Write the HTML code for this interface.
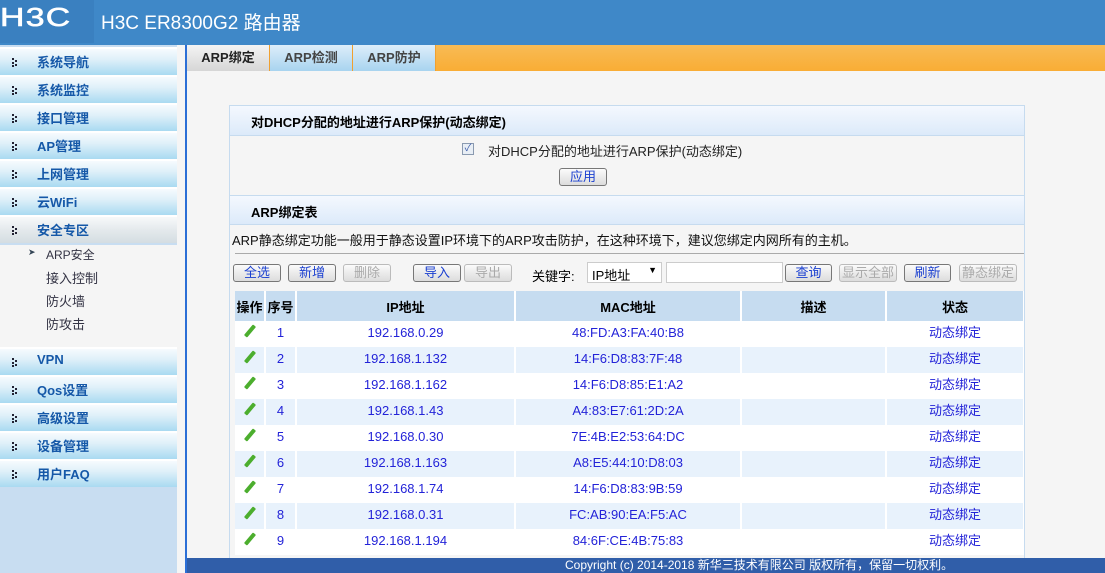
<!DOCTYPE html>
<html><head><meta charset="utf-8"><style>
*{margin:0;padding:0;box-sizing:border-box}
body{width:1105px;height:573px;overflow:hidden;background:#f5f5f5;font-family:"Liberation Sans","Noto Sans CJK SC",sans-serif;font-size:12px;position:relative;color:#000}
.a{position:absolute}
#hd{left:0;top:0;width:1105px;height:45px;background:#3f88c8}
#logo{left:0;top:0;width:94px;height:43px;background:#3a80c0;overflow:hidden}
#logo span{position:absolute;left:0;top:0;color:#fff;font:26px "Liberation Sans",sans-serif;line-height:34px;letter-spacing:1px;transform:scaleX(1.3);transform-origin:left;-webkit-text-stroke:0.6px #fff}
#title{left:101px;top:8px;color:#fff;font-size:19px}
#side{left:0;top:45px;width:177px;height:528px;background:#c8ddf1}
.mi{position:absolute;left:0;width:177px;height:28px;background:linear-gradient(#f6fbfe 0%,#dff0f9 40%,#a9daf1 100%);border-top:2px solid #fff}
.mi b{position:absolute;left:37px;top:3px;color:#1558a8;font-size:13px;font-weight:bold}
.mi i{position:absolute;left:12px;top:9px;width:2px;height:2px;background:#223;box-shadow:3px 2px 0 #223,0 4px 0 #223,3px 6px 0 #223 ,0 7px 0 #223}
.sub{position:absolute;left:46px;color:#334;font-size:13px}
#vline{left:185px;top:45px;width:2px;height:528px;background:#2c6fd6}
#tabs{left:187px;top:45px;width:918px;height:26px;background:linear-gradient(#f8bb55,#f9ad35)}
.tab{position:absolute;top:0;height:26px;width:83px;background:linear-gradient(#ddeefa,#a8d4ef);border-right:1px solid #f0a030;color:#444;font-weight:bold;font-size:13px;text-align:center;line-height:25px}
#panel{left:229px;top:105px;width:796px;height:460px;border:1px solid #c6dbef;background:#f5f5f5;overflow:hidden}
.ph{position:absolute;left:0;width:794px;height:30px;background:linear-gradient(#f4f8fe,#dceafa);border-bottom:1px solid #c6dbef;font-weight:bold;font-size:13px;padding:6px 0 0 21px}
.btn{position:absolute;height:18px;border:1px solid #777;border-radius:3px;background:linear-gradient(#fbfbfb,#dcdcdc);color:#1a3fd0;text-align:center;line-height:16px;font-size:13px}
.btn.d{color:#aaa;border-color:#bbb}
table{border-collapse:collapse;position:absolute;left:5px;top:185px;width:789px;table-layout:fixed}
th{background:#c6dcf0;height:30px;font-weight:bold;font-size:13px;border-right:2px solid #fff}
td{height:26px;text-align:center;color:#2323d8;font-size:13px;border-right:2px solid #fff;line-height:14px;padding-bottom:2px}
tr.e td{background:#e8f2fc}tr.o td{background:#fff}
#foot{left:187px;top:558px;width:918px;height:15px;background:#305ea9;color:#fff;font-size:12px;line-height:15px;padding-left:378px}
td:first-child{color:#3a9a2a;font-size:0}
td:first-child::before{content:"";display:inline-block;width:14px;height:4px;background:#4cae2e;transform:rotate(-50deg);border-radius:1px}
</style></head><body>
<div id="hd" class="a"></div>
<div id="logo" class="a"><span>H3C</span></div>
<div id="title" class="a">H3C ER8300G2 路由器</div>
<div id="side" class="a">
<div class="mi" style="top:2px"><i></i><b>系统导航</b></div>
<div class="mi" style="top:30px"><i></i><b>系统监控</b></div>
<div class="mi" style="top:58px"><i></i><b>接口管理</b></div>
<div class="mi" style="top:86px"><i></i><b>AP管理</b></div>
<div class="mi" style="top:114px"><i></i><b>上网管理</b></div>
<div class="mi" style="top:142px"><i></i><b>云WiFi</b></div>
<div class="mi" style="top:170px;background:linear-gradient(#f7f9fa,#e4e9ec 50%,#d4dde2)"><i></i><b>安全专区</b></div>
<div style="position:absolute;left:0;top:200px;width:177px;height:102px;background:#f5f5f5"></div>
<div class="sub" style="top:202px;left:28px;font-size:9px;color:#345">&#10148;</div>
<div class="sub" style="top:201px;font-size:12px">ARP安全</div>
<div class="sub" style="top:223px">接入控制</div>
<div class="sub" style="top:246px">防火墙</div>
<div class="sub" style="top:269px">防攻击</div>
<div class="mi" style="top:302px"><i></i><b>VPN</b></div>
<div class="mi" style="top:330px"><i></i><b>Qos设置</b></div>
<div class="mi" style="top:358px"><i></i><b>高级设置</b></div>
<div class="mi" style="top:386px"><i></i><b>设备管理</b></div>
<div class="mi" style="top:414px"><i></i><b>用户FAQ</b></div>
</div>
<div id="vline" class="a"></div>
<div id="tabs" class="a">
<div class="tab" style="left:0;background:linear-gradient(#f4f4f4,#d6d6d6);color:#222">ARP绑定</div>
<div class="tab" style="left:83px">ARP检测</div>
<div class="tab" style="left:166px">ARP防护</div>
</div>
<div id="panel" class="a">
<div class="ph" style="top:0">对DHCP分配的地址进行ARP保护(动态绑定)</div>
<div class="a" style="left:232px;top:37px;width:12px;height:12px;border:1px solid #8a9ab0;background:#e8eef5;color:#3a5aa8;font-size:10px;line-height:10px;text-align:center">✓</div>
<div class="a" style="left:258px;top:35px;font-size:13px;color:#222">对DHCP分配的地址进行ARP保护(动态绑定)</div>
<div class="btn" style="left:329px;top:62px;width:48px">应用</div>
<div class="ph" style="top:89px;border-top:1px solid #c6dbef">ARP绑定表</div>
<div class="a" style="left:2px;top:124px;font-size:13px;color:#111">ARP静态绑定功能一般用于静态设置IP环境下的ARP攻击防护，在这种环境下，建议您绑定内网所有的主机。</div>
<div class="a" style="left:5px;top:147px;width:789px;height:1px;background:#aaa"></div>
<div class="btn" style="left:3px;top:158px;width:48px">全选</div>
<div class="btn" style="left:58px;top:158px;width:48px">新增</div>
<div class="btn d" style="left:113px;top:158px;width:48px">删除</div>
<div class="btn" style="left:183px;top:158px;width:48px">导入</div>
<div class="btn d" style="left:234px;top:158px;width:48px">导出</div>
<div class="a" style="left:302px;top:160px;font-size:13px">关键字:</div>
<div class="a" style="left:357px;top:156px;width:75px;height:21px;border:1px solid #ccc;background:#fff;font-size:13px;padding:2px 4px">IP地址<span style="position:absolute;right:4px;top:2px;font-size:9px">▼</span></div>
<div class="a" style="left:436px;top:156px;width:117px;height:21px;border:1px solid #ccc;background:#fff"></div>
<div class="btn" style="left:555px;top:158px;width:47px">查询</div>
<div class="btn d" style="left:609px;top:158px;width:58px">显示全部</div>
<div class="btn" style="left:674px;top:158px;width:47px">刷新</div>
<div class="btn d" style="left:729px;top:158px;width:58px">静态绑定</div>
<table>
<colgroup><col style="width:30px"><col style="width:31px"><col style="width:219px"><col style="width:226px"><col style="width:145px"><col style="width:138px"></colgroup>
<tr><th>操作</th><th>序号</th><th>IP地址</th><th>MAC地址</th><th>描述</th><th>状态</th></tr>
<tr class="o"><td>e</td><td>1</td><td>192.168.0.29</td><td>48:FD:A3:FA:40:B8</td><td></td><td>动态绑定</td></tr>
<tr class="e"><td>e</td><td>2</td><td>192.168.1.132</td><td>14:F6:D8:83:7F:48</td><td></td><td>动态绑定</td></tr>
<tr class="o"><td>e</td><td>3</td><td>192.168.1.162</td><td>14:F6:D8:85:E1:A2</td><td></td><td>动态绑定</td></tr>
<tr class="e"><td>e</td><td>4</td><td>192.168.1.43</td><td>A4:83:E7:61:2D:2A</td><td></td><td>动态绑定</td></tr>
<tr class="o"><td>e</td><td>5</td><td>192.168.0.30</td><td>7E:4B:E2:53:64:DC</td><td></td><td>动态绑定</td></tr>
<tr class="e"><td>e</td><td>6</td><td>192.168.1.163</td><td>A8:E5:44:10:D8:03</td><td></td><td>动态绑定</td></tr>
<tr class="o"><td>e</td><td>7</td><td>192.168.1.74</td><td>14:F6:D8:83:9B:59</td><td></td><td>动态绑定</td></tr>
<tr class="e"><td>e</td><td>8</td><td>192.168.0.31</td><td>FC:AB:90:EA:F5:AC</td><td></td><td>动态绑定</td></tr>
<tr class="o"><td>e</td><td>9</td><td>192.168.1.194</td><td>84:6F:CE:4B:75:83</td><td></td><td>动态绑定</td></tr>
</table>
</div>
<div id="foot" class="a">Copyright (c) 2014-2018 新华三技术有限公司 版权所有，保留一切权利。</div>
</body></html>
